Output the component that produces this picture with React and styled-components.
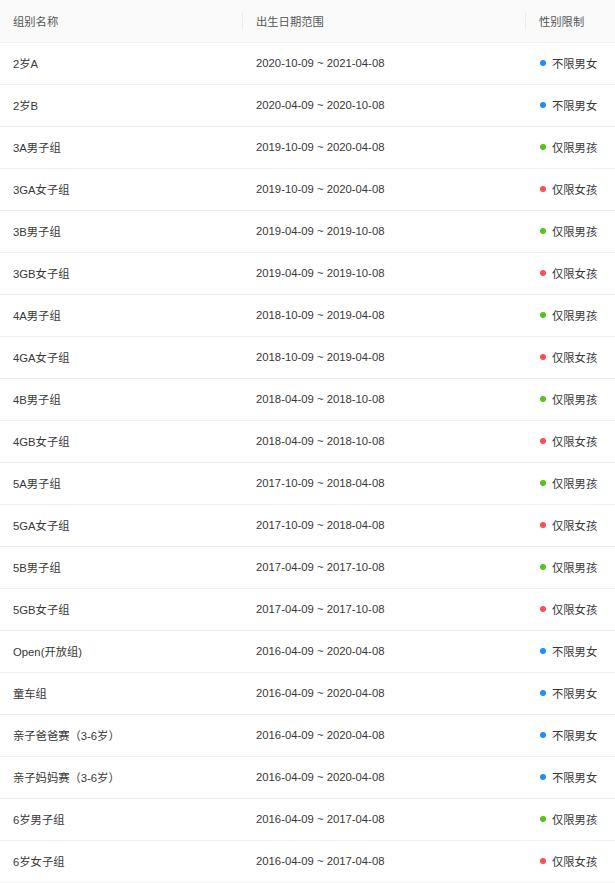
import React from 'react';
import styled, { createGlobalStyle } from 'styled-components';

const GlobalStyle = createGlobalStyle`
  body {
    margin: 0;
    background: #fff;
    font-family: "Liberation Sans", "Noto Sans CJK SC", sans-serif;
  }
`;

const Table = styled.table`
  width: 615px;
  border-collapse: collapse;
  table-layout: fixed;
  font-size: 11.3px;
  color: #383838;
`;

const HeadCell = styled.th`
  position: relative;
  height: 42px;
  padding: 0 13px;
  background: #fafafa;
  border-bottom: 1px solid #f0f0f0;
  color: #555;
  font-weight: normal;
  text-align: left;
  box-sizing: border-box;

  &:not(:first-child)::before {
    content: '';
    position: absolute;
    left: -1px;
    top: 50%;
    width: 1px;
    height: 18px;
    transform: translateY(-50%);
    background: #ececec;
  }
`;

const Cell = styled.td`
  height: 42px;
  padding: 0 13px;
  border-bottom: 1px solid #f0f0f0;
  box-sizing: border-box;
  white-space: nowrap;
`;

const Status = styled.span`
  display: inline-flex;
  align-items: center;
  gap: 6px;
  margin-left: 1px;
`;

const Dot = styled.span`
  width: 6px;
  height: 6px;
  border-radius: 50%;
  background: ${(p) => p.$color};
`;

const genders = {
  any: { label: '不限男女', color: '#1890ff' },
  boy: { label: '仅限男孩', color: '#52c41a' },
  girl: { label: '仅限女孩', color: '#ff4d4f' },
};

const rows = [
  ['2岁A', '2020-10-09 ~ 2021-04-08', 'any'],
  ['2岁B', '2020-04-09 ~ 2020-10-08', 'any'],
  ['3A男子组', '2019-10-09 ~ 2020-04-08', 'boy'],
  ['3GA女子组', '2019-10-09 ~ 2020-04-08', 'girl'],
  ['3B男子组', '2019-04-09 ~ 2019-10-08', 'boy'],
  ['3GB女子组', '2019-04-09 ~ 2019-10-08', 'girl'],
  ['4A男子组', '2018-10-09 ~ 2019-04-08', 'boy'],
  ['4GA女子组', '2018-10-09 ~ 2019-04-08', 'girl'],
  ['4B男子组', '2018-04-09 ~ 2018-10-08', 'boy'],
  ['4GB女子组', '2018-04-09 ~ 2018-10-08', 'girl'],
  ['5A男子组', '2017-10-09 ~ 2018-04-08', 'boy'],
  ['5GA女子组', '2017-10-09 ~ 2018-04-08', 'girl'],
  ['5B男子组', '2017-04-09 ~ 2017-10-08', 'boy'],
  ['5GB女子组', '2017-04-09 ~ 2017-10-08', 'girl'],
  ['Open(开放组)', '2016-04-09 ~ 2020-04-08', 'any'],
  ['童车组', '2016-04-09 ~ 2020-04-08', 'any'],
  ['亲子爸爸赛（3-6岁）', '2016-04-09 ~ 2020-04-08', 'any'],
  ['亲子妈妈赛（3-6岁）', '2016-04-09 ~ 2020-04-08', 'any'],
  ['6岁男子组', '2016-04-09 ~ 2017-04-08', 'boy'],
  ['6岁女子组', '2016-04-09 ~ 2017-04-08', 'girl'],
];

const App = () => (
  <>
    <GlobalStyle />
    <Table>
      <colgroup>
        <col style={{ width: 243 }} />
        <col style={{ width: 283 }} />
        <col style={{ width: 89 }} />
      </colgroup>
      <thead>
        <tr>
          <HeadCell>组别名称</HeadCell>
          <HeadCell>出生日期范围</HeadCell>
          <HeadCell>性别限制</HeadCell>
        </tr>
      </thead>
      <tbody>
        {rows.map(([name, range, gender], index) => (
          <tr key={index}>
            <Cell>{name}</Cell>
            <Cell>{range}</Cell>
            <Cell>
              <Status>
                <Dot $color={genders[gender].color} />
                {genders[gender].label}
              </Status>
            </Cell>
          </tr>
        ))}
      </tbody>
    </Table>
  </>
);

export default App;
